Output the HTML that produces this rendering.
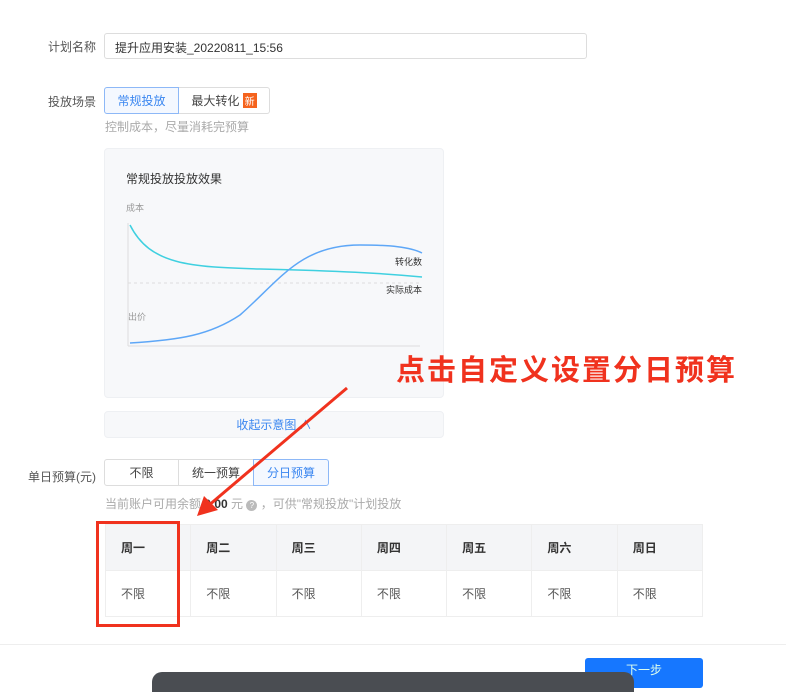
<!DOCTYPE html>
<html><head><meta charset="utf-8"><style>
*{margin:0;padding:0;box-sizing:border-box}
body{width:786px;height:685px;background:#fff;position:relative;overflow:hidden;font-family:"Liberation Sans","Noto Sans CJK SC",sans-serif;font-size:12px;color:#333}
.a{position:absolute}
.lbl{color:#555;font-size:12px}
.seg{position:absolute;border:1px solid #ddd;display:flex;align-items:center;justify-content:center;color:#444;background:#fff}
.sel{border-color:#8db8f7;color:#3a86f0;background:#f4f8ff}
td,th{border:1px solid #eee;text-align:left;padding-left:15px;font-size:12px}
th{background:#f4f5f7;height:46px;font-weight:bold;color:#333}
td{height:46px;color:#555}
</style></head><body>
<div class="a lbl" style="left:48px;top:38px">计划名称</div>
<div class="a" style="left:104px;top:33px;width:483px;height:26px;border:1px solid #ddd;border-radius:3px;padding:5px 10px;color:#333">提升应用安装_20220811_15:56</div>
<div class="a lbl" style="left:48px;top:93px">投放场景</div>
<div class="seg sel" style="left:104px;top:87px;width:75px;height:27px;border-radius:3px 0 0 3px">常规投放</div>
<div class="seg" style="left:179px;top:87px;width:91px;height:27px;border-left:none;border-radius:0 3px 3px 0">最大转化&nbsp;<span style="background:#f5631d;color:#fff;font-size:10px;padding:0 2px">新</span></div>
<div class="a" style="left:105px;top:118px;color:#aaa">控制成本，尽量消耗完预算</div>
<div class="a" style="left:104px;top:148px;width:340px;height:250px;background:#f7f8fa;border:1px solid #eef0f3;border-radius:4px"></div>
<div class="a" style="left:126px;top:170px;font-size:12px;color:#333">常规投放投放效果</div>
<svg class="a" style="left:100px;top:195px" width="350" height="170">
<text x="26" y="16" font-size="9" fill="#999" font-family="Noto Sans CJK SC">成本</text>
<text x="28" y="125" font-size="9" fill="#999" font-family="Noto Sans CJK SC">出价</text>
<line x1="28" y1="28" x2="28" y2="151" stroke="#ddd"/>
<line x1="28" y1="151" x2="320" y2="151" stroke="#ddd"/>
<line x1="28" y1="88" x2="322" y2="88" stroke="#ddd" stroke-dasharray="3,3"/>
<path d="M30 30 C50 70 90 72 160 74 C240 76 280 78 322 82" stroke="#3fd0e0" stroke-width="1.5" fill="none"/>
<path d="M30 148 C80 145 110 140 140 120 C180 85 200 50 260 50 C290 50 310 52 322 58" stroke="#5ea7f7" stroke-width="1.5" fill="none"/>
<text x="322" y="70" font-size="9" fill="#333" text-anchor="end" font-family="Noto Sans CJK SC">转化数</text>
<text x="322" y="98" font-size="9" fill="#333" text-anchor="end" font-family="Noto Sans CJK SC">实际成本</text>
</svg>
<div class="a" style="left:104px;top:411px;width:340px;height:27px;background:#f7f8fa;border:1px solid #eef0f3;border-radius:4px;text-align:center;line-height:26px;color:#3a86f0">收起示意图 ∧</div>
<div class="a lbl" style="left:28px;top:468px">单日预算(元)</div>
<div class="seg" style="left:104px;top:459px;width:75px;height:27px;border-radius:3px 0 0 3px">不限</div>
<div class="seg" style="left:179px;top:459px;width:75px;height:27px;border-left:none">统一预算</div>
<div class="seg sel" style="left:253px;top:459px;width:76px;height:27px;border-radius:0 3px 3px 0">分日预算</div>
<div class="a" style="left:105px;top:495px;color:#aaa">当前账户可用余额 <b style="color:#333">0.00</b> 元 <span style="display:inline-block;width:11px;height:11px;border-radius:50%;background:#bbb;color:#fff;font-size:8px;text-align:center;line-height:11px">?</span> ，可供"常规投放"计划投放</div>
<table class="a" style="left:105px;top:524px;width:598px;border-collapse:collapse;table-layout:fixed">
<tr><th>周一</th><th>周二</th><th>周三</th><th>周四</th><th>周五</th><th>周六</th><th>周日</th></tr>
<tr><td>不限</td><td>不限</td><td>不限</td><td>不限</td><td>不限</td><td>不限</td><td>不限</td></tr>
</table>
<div class="a" style="left:96px;top:521px;width:84px;height:106px;border:3px solid #f0321e"></div>
<div class="a" style="left:396px;top:347px;font-size:29px;font-weight:bold;color:#f0321e;letter-spacing:2px;white-space:nowrap">点击自定义设置分日预算</div>
<svg class="a" style="left:0;top:0" width="786" height="685">
<line x1="347" y1="388" x2="208" y2="506" stroke="#f0321e" stroke-width="3"/>
<polygon points="197,516 204,496 218,510" fill="#f0321e"/>
</svg>
<div class="a" style="left:0;top:644px;width:786px;height:1px;background:#eee"></div>
<div class="a" style="left:585px;top:658px;width:118px;height:30px;background:#1677ff;border-radius:3px;color:#dfe;text-align:center;line-height:24px">下一步</div>
<div class="a" style="left:152px;top:672px;width:482px;height:20px;background:#4a4d52;border-radius:10px 10px 0 0"></div>
</body></html>
